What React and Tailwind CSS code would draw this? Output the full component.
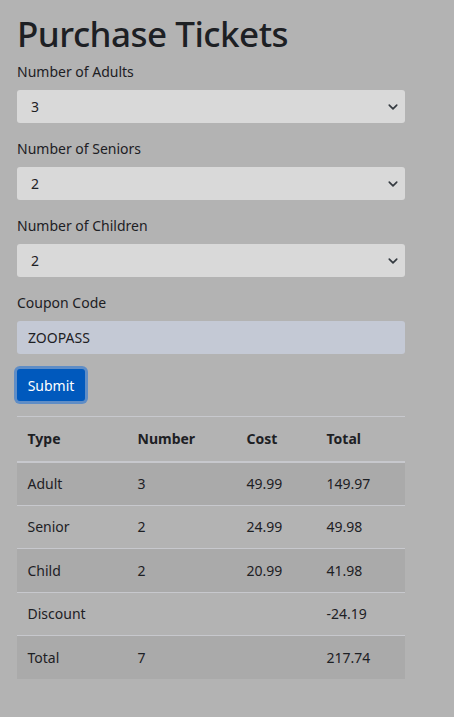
import { useState } from 'react';

const OPTIONS = ['0', '1', '2', '3', '4', '5', '6', '7', '8', '9', '10'];

const ROWS = [
  { type: 'Adult', number: '3', cost: '49.99', total: '149.97', striped: true },
  { type: 'Senior', number: '2', cost: '24.99', total: '49.98', striped: false },
  { type: 'Child', number: '2', cost: '20.99', total: '41.98', striped: true },
  { type: 'Discount', number: '', cost: '', total: '-24.19', striped: false },
  { type: 'Total', number: '7', cost: '', total: '217.74', striped: true },
];

function Chevron() {
  return (
    <svg width="10" height="10" viewBox="0 0 16 16" className="pointer-events-none absolute right-[7px] top-[12px]">
      <path d="M2 5l6 6 6-6" fill="none" stroke="#343a40" strokeWidth="2.6" strokeLinecap="round" strokeLinejoin="round" />
    </svg>
  );
}

function SelectField({ label, value, onChange }) {
  return (
    <div className="mb-[15px]">
      <label className="block h-[21px] leading-[21px] mb-[8px]">{label}</label>
      <div className="relative">
        <select value={value} onChange={e => onChange(e.target.value)}
          className="appearance-none block w-full h-[33px] pl-[14px] pr-[24px] rounded-[3px] bg-[#d9d9d9] text-[#1d2024] text-[14px] outline-none">
          {OPTIONS.map(o => <option key={o} value={o}>{o}</option>)}
        </select>
        <Chevron />
      </div>
    </div>
  );
}

export default function App() {
  const [adults,   setAdults]   = useState('3');
  const [seniors,  setSeniors]  = useState('2');
  const [children, setChildren] = useState('2');
  const [coupon,   setCoupon]   = useState('ZOOPASS');

  return (
    <div className="min-h-[717px] bg-[#b3b3b3] text-[#1d2024] text-[14px]"
      style={{ fontFamily: '"Noto Sans", "Open Sans", sans-serif' }}>
      <div className="pl-[17px] w-[405px] pt-[13px] pb-[20px]">
        <h1 className="text-[35px] leading-[42px] font-medium mb-[6px] tracking-[-0.5px]">Purchase Tickets</h1>

        <form onSubmit={e => e.preventDefault()}>
          <SelectField label="Number of Adults" value={adults} onChange={setAdults} />
          <SelectField label="Number of Seniors" value={seniors} onChange={setSeniors} />
          <SelectField label="Number of Children" value={children} onChange={setChildren} />

          <div className="mb-[15px]">
            <label className="block h-[21px] leading-[21px] mb-[8px]">Coupon Code</label>
            <input type="text" value={coupon} onChange={e => setCoupon(e.target.value)}
              className="block w-full h-[33px] px-[11px] rounded-[3px] bg-[#c4c9d5] text-[#1d2024] text-[14px] outline-none" />
          </div>

          <button type="submit"
            className="h-[32px] w-[68px] rounded-[3px] bg-[#0059bd] text-white text-[14px] ring-[3px] ring-[#5f8dc6] mb-[15px]">
            Submit
          </button>
        </form>

        <table className="w-full border-collapse text-left">
          <thead>
            <tr className="border-t border-[#c7c8cd]">
              <th className="w-[110px] h-[45px] px-[10.5px] font-bold border-b-2 border-[#c7c8cd]">Type</th>
              <th className="w-[109px] h-[45px] px-[10.5px] font-bold border-b-2 border-[#c7c8cd]">Number</th>
              <th className="w-[80px] h-[45px] px-[10.5px] font-bold border-b-2 border-[#c7c8cd]">Cost</th>
              <th className="h-[45px] px-[10.5px] font-bold border-b-2 border-[#c7c8cd]">Total</th>
            </tr>
          </thead>
          <tbody>
            {ROWS.map((r, i) => (
              <tr key={r.type} className={`${i > 0 ? 'border-t border-[#c7c8cd]' : ''} ${r.striped ? 'bg-[#aaaaaa]' : ''}`}>
                <td className="h-[43.5px] px-[10.5px]">{r.type}</td>
                <td className="h-[43.5px] px-[10.5px]">{r.number}</td>
                <td className="h-[43.5px] px-[10.5px]">{r.cost}</td>
                <td className="h-[43.5px] px-[10.5px]">{r.total}</td>
              </tr>
            ))}
          </tbody>
        </table>
      </div>
    </div>
  );
}
